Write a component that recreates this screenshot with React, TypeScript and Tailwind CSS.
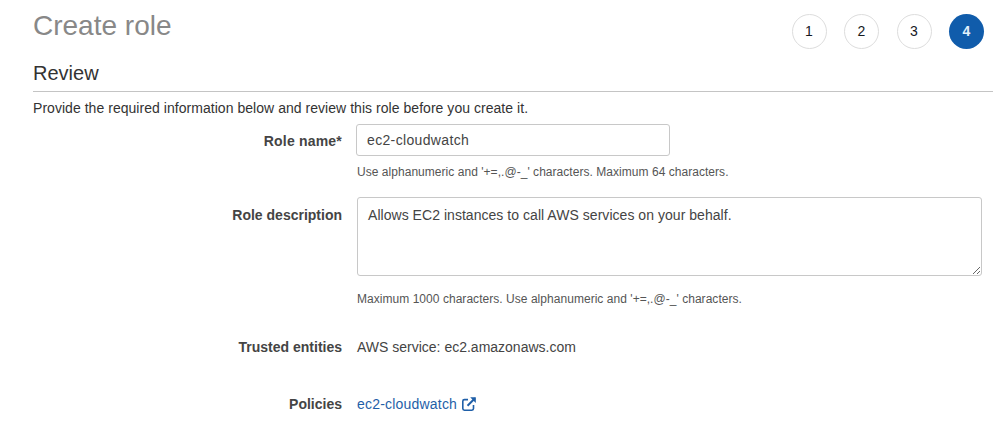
const steps = [1, 2, 3, 4]

function ExternalIcon() {
  return (
    <svg viewBox="0 0 16 16" className="ml-[4px] h-[16px] w-[16px]" fill="none" stroke="currentColor" strokeWidth="1.6">
      <path d="M12.5 9v3.6a1.6 1.6 0 0 1-1.6 1.6H3.4a1.6 1.6 0 0 1-1.6-1.6V5.2a1.6 1.6 0 0 1 1.6-1.6H7" />
      <path d="M6.5 9.7 14 2.2" strokeWidth="2" />
      <path d="M9.2 1.3h5.6v5.6z" fill="currentColor" stroke="none" />
    </svg>
  )
}

function Row({
  label,
  className,
  labelClassName,
  children,
}: {
  label: string
  className: string
  labelClassName?: string
  children: React.ReactNode
}) {
  return (
    <div className={`flex ${className}`}>
      <div className={`w-[342px] shrink-0 text-right text-[14px] font-bold leading-[20px] text-[#444] ${labelClassName ?? ""}`}>
        {label}
      </div>
      <div className="ml-[14px] flex-1 min-w-0">{children}</div>
    </div>
  )
}

export default function App() {
  return (
    <div className="h-[444px] w-[1003px] overflow-hidden bg-white font-['Liberation_Sans',Arial,sans-serif] text-[#444]">
      <div className="flex items-start justify-between pl-[33px] pr-[19px] pt-[8px]">
        <h1 className="text-[28px] leading-[36px] text-[#888888]">Create role</h1>
        <div className="mt-[6px] flex gap-[17.5px]">
          {steps.map((step) => (
            <div
              key={step}
              className={`flex h-[35px] w-[35px] items-center justify-center rounded-full text-[14px] ${
                step === 4 ? "bg-[#105cab] font-bold text-[#e1f0fb]" : "border border-[#dddddd] bg-white text-[#16191f]"
              }`}
            >
              {step}
            </div>
          ))}
        </div>
      </div>

      <div className="ml-[33px] mr-[10px] mt-[11px] border-b border-[#c4c4c4] pb-[4px]">
        <h2 className="text-[20px] leading-[27px] text-[#333]">Review</h2>
      </div>

      <p className="ml-[33px] mt-[6px] text-[14px] leading-[20px] tracking-[0.04px] text-[#333]">
        Provide the required information below and review this role before you create it.
      </p>

      <Row label="Role name*" className="mt-[6px]" labelClassName="pt-[7px] tracking-[0.2px]">
        <input
          readOnly
          value="ec2-cloudwatch"
          className="block h-[32px] w-[314px] rounded-[3px] border border-[#c8c8c8] bg-white px-[10px] text-[14px] tracking-[0.35px] text-[#444] outline-none"
        />
        <div className="ml-px mt-[8px] text-[12px] leading-[16px] tracking-[0.04px] text-[#555]">
          Use alphanumeric and '+=,.@-_' characters. Maximum 64 characters.
        </div>
      </Row>

      <Row label="Role description" className="mt-[17px]" labelClassName="pt-[8px]">
        <textarea
          readOnly
          value="Allows EC2 instances to call AWS services on your behalf."
          className="ml-px block h-[79px] w-[625px] rounded-[3px] border border-[#c8c8c8] bg-white px-[10px] py-[8px] text-[14px] leading-[18px] tracking-[0.04px] text-[#444] outline-none"
        />
        <div className="ml-px mt-[15px] text-[12px] leading-[16px] tracking-[0.04px] text-[#555]">
          Maximum 1000 characters. Use alphanumeric and '+=,.@-_' characters.
        </div>
      </Row>

      <Row label="Trusted entities" className="mt-[30px]">
        <div className="ml-px text-[14px] leading-[20px] text-[#444]">AWS service: ec2.amazonaws.com</div>
      </Row>

      <Row label="Policies" className="mt-[37px]">
        <a className="ml-px flex items-center text-[14px] leading-[20px] tracking-[0.2px] text-[#1f5fa8]">
          ec2-cloudwatch
          <ExternalIcon />
        </a>
      </Row>
    </div>
  )
}
